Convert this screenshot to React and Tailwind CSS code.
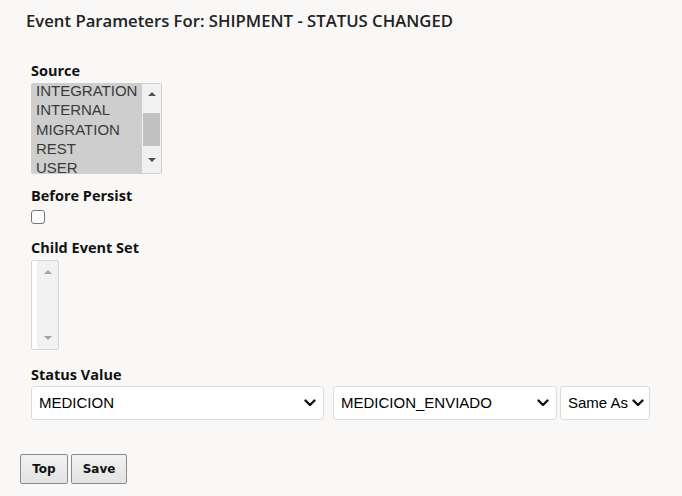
import React from "react";

const ARIAL = "font-['Liberation_Sans',Arial,sans-serif]";

function Chevron() {
  return (
    <svg width="12" height="8" viewBox="0 0 12 8" className="shrink-0">
      <path d="M1.5 1.5 L6 6 L10.5 1.5" fill="none" stroke="#111" strokeWidth="2.4" strokeLinecap="round" strokeLinejoin="round" />
    </svg>
  );
}

function Select({ value, w, pl = "pl-[6px]", pr = "pr-[7px]" }) {
  return (
    <div className={`${w} h-[34px] border border-[#dcdcdc] rounded-[3px] bg-white flex items-center justify-between ${pl} ${pr} ${ARIAL} text-[15px] text-black`}>
      <span>{value}</span>
      <Chevron />
    </div>
  );
}

function UpTri({ c }) {
  return <div className={`w-0 h-0 border-l-[4px] border-r-[4px] border-l-transparent border-r-transparent border-b-[4px] ${c}`} />;
}
function DownTri({ c }) {
  return <div className={`w-0 h-0 border-l-[4px] border-r-[4px] border-l-transparent border-r-transparent border-t-[4px] ${c}`} />;
}

const LABEL = "text-[14.5px] leading-[20px] font-bold text-[#111]";

export default function App() {
  const items = ["INTEGRATION", "INTERNAL", "MIGRATION", "REST", "USER"];
  return (
    <div className="w-[682px] h-[496px] bg-[#f9f8f7] font-['Open_Sans',sans-serif] text-[#1f1f1f] overflow-hidden">
      <h1 className="pt-[9px] pl-[26px] text-[16.7px] leading-[24px] font-semibold text-[#222]">
        Event Parameters For: SHIPMENT - STATUS CHANGED
      </h1>

      <div className="pl-[31px] pt-[28px]">
        <div className={LABEL}>Source</div>
        <div className="mt-[2px] w-[131px] h-[91px] border border-[#cfcfcf] rounded-[2px] bg-white flex overflow-hidden">
          <div className="flex-1 overflow-hidden bg-[#cecece]">
            <div className="-mt-[3px]">
              {items.map((it) => (
                <div key={it} className={`h-[19.3px] leading-[19.3px] pl-[4px] text-[15px] ${ARIAL} text-[#3a3a3a] whitespace-nowrap`}>
                  {it}
                </div>
              ))}
            </div>
          </div>
          <div className="w-[19px] bg-[#f1f1f1] flex flex-col items-center">
            <div className="h-[20px] flex items-center justify-center"><UpTri c="border-b-[#505050]" /></div>
            <div className="mt-[9px] w-[17px] h-[33px] bg-[#c1c1c1]" />
            <div className="flex-1" />
            <div className="h-[20px] mb-[3px] flex items-center justify-center"><DownTri c="border-t-[#505050]" /></div>
          </div>
        </div>

        <div className={`mt-[12px] ${LABEL}`}>Before Persist</div>
        <div className="mt-[4px] w-[14px] h-[14px] border border-[#767676] rounded-[3px] bg-white" />

        <div className={`mt-[14px] ${LABEL}`}>Child Event Set</div>
        <div className="mt-[2px] w-[28px] h-[90px] border border-[#d6d6d6] rounded-[2px] bg-white flex overflow-hidden">
          <div className="w-[5px]" />
          <div className="flex-1 bg-[#f1f1f1] flex flex-col items-center">
            <div className="h-[22px] flex items-center justify-center"><UpTri c="border-b-[#a3a3a3]" /></div>
            <div className="flex-1" />
            <div className="h-[22px] flex items-center justify-center"><DownTri c="border-t-[#a3a3a3]" /></div>
          </div>
        </div>

        <div className={`mt-[15px] ${LABEL}`}>Status Value</div>
        <div className="mt-[1px] flex">
          <Select value="MEDICION" w="w-[293px]" pl="pl-[7px]" />
          <div className="w-[9px]" />
          <Select value="MEDICION_ENVIADO" w="w-[224px]" pl="pl-[7px]" />
          <div className="w-[3px]" />
          <Select value="Same As" w="w-[90px]" pl="pl-[7px]" pr="pr-[5px]" />
        </div>
      </div>

      <div className="mt-[34px] pl-[20px] flex gap-[3px]">
        <button className="w-[48px] h-[30px] border border-[#8a8a8a] rounded-[2px] bg-gradient-to-b from-[#f2f2f2] to-[#e3e3e3] font-['DejaVu_Sans',Verdana,sans-serif] font-bold text-[12px] text-[#111]">
          Top
        </button>
        <button className="w-[56px] h-[30px] border border-[#8a8a8a] rounded-[2px] bg-gradient-to-b from-[#f2f2f2] to-[#e3e3e3] font-['DejaVu_Sans',Verdana,sans-serif] font-bold text-[12px] text-[#111]">
          Save
        </button>
      </div>
    </div>
  );
}
